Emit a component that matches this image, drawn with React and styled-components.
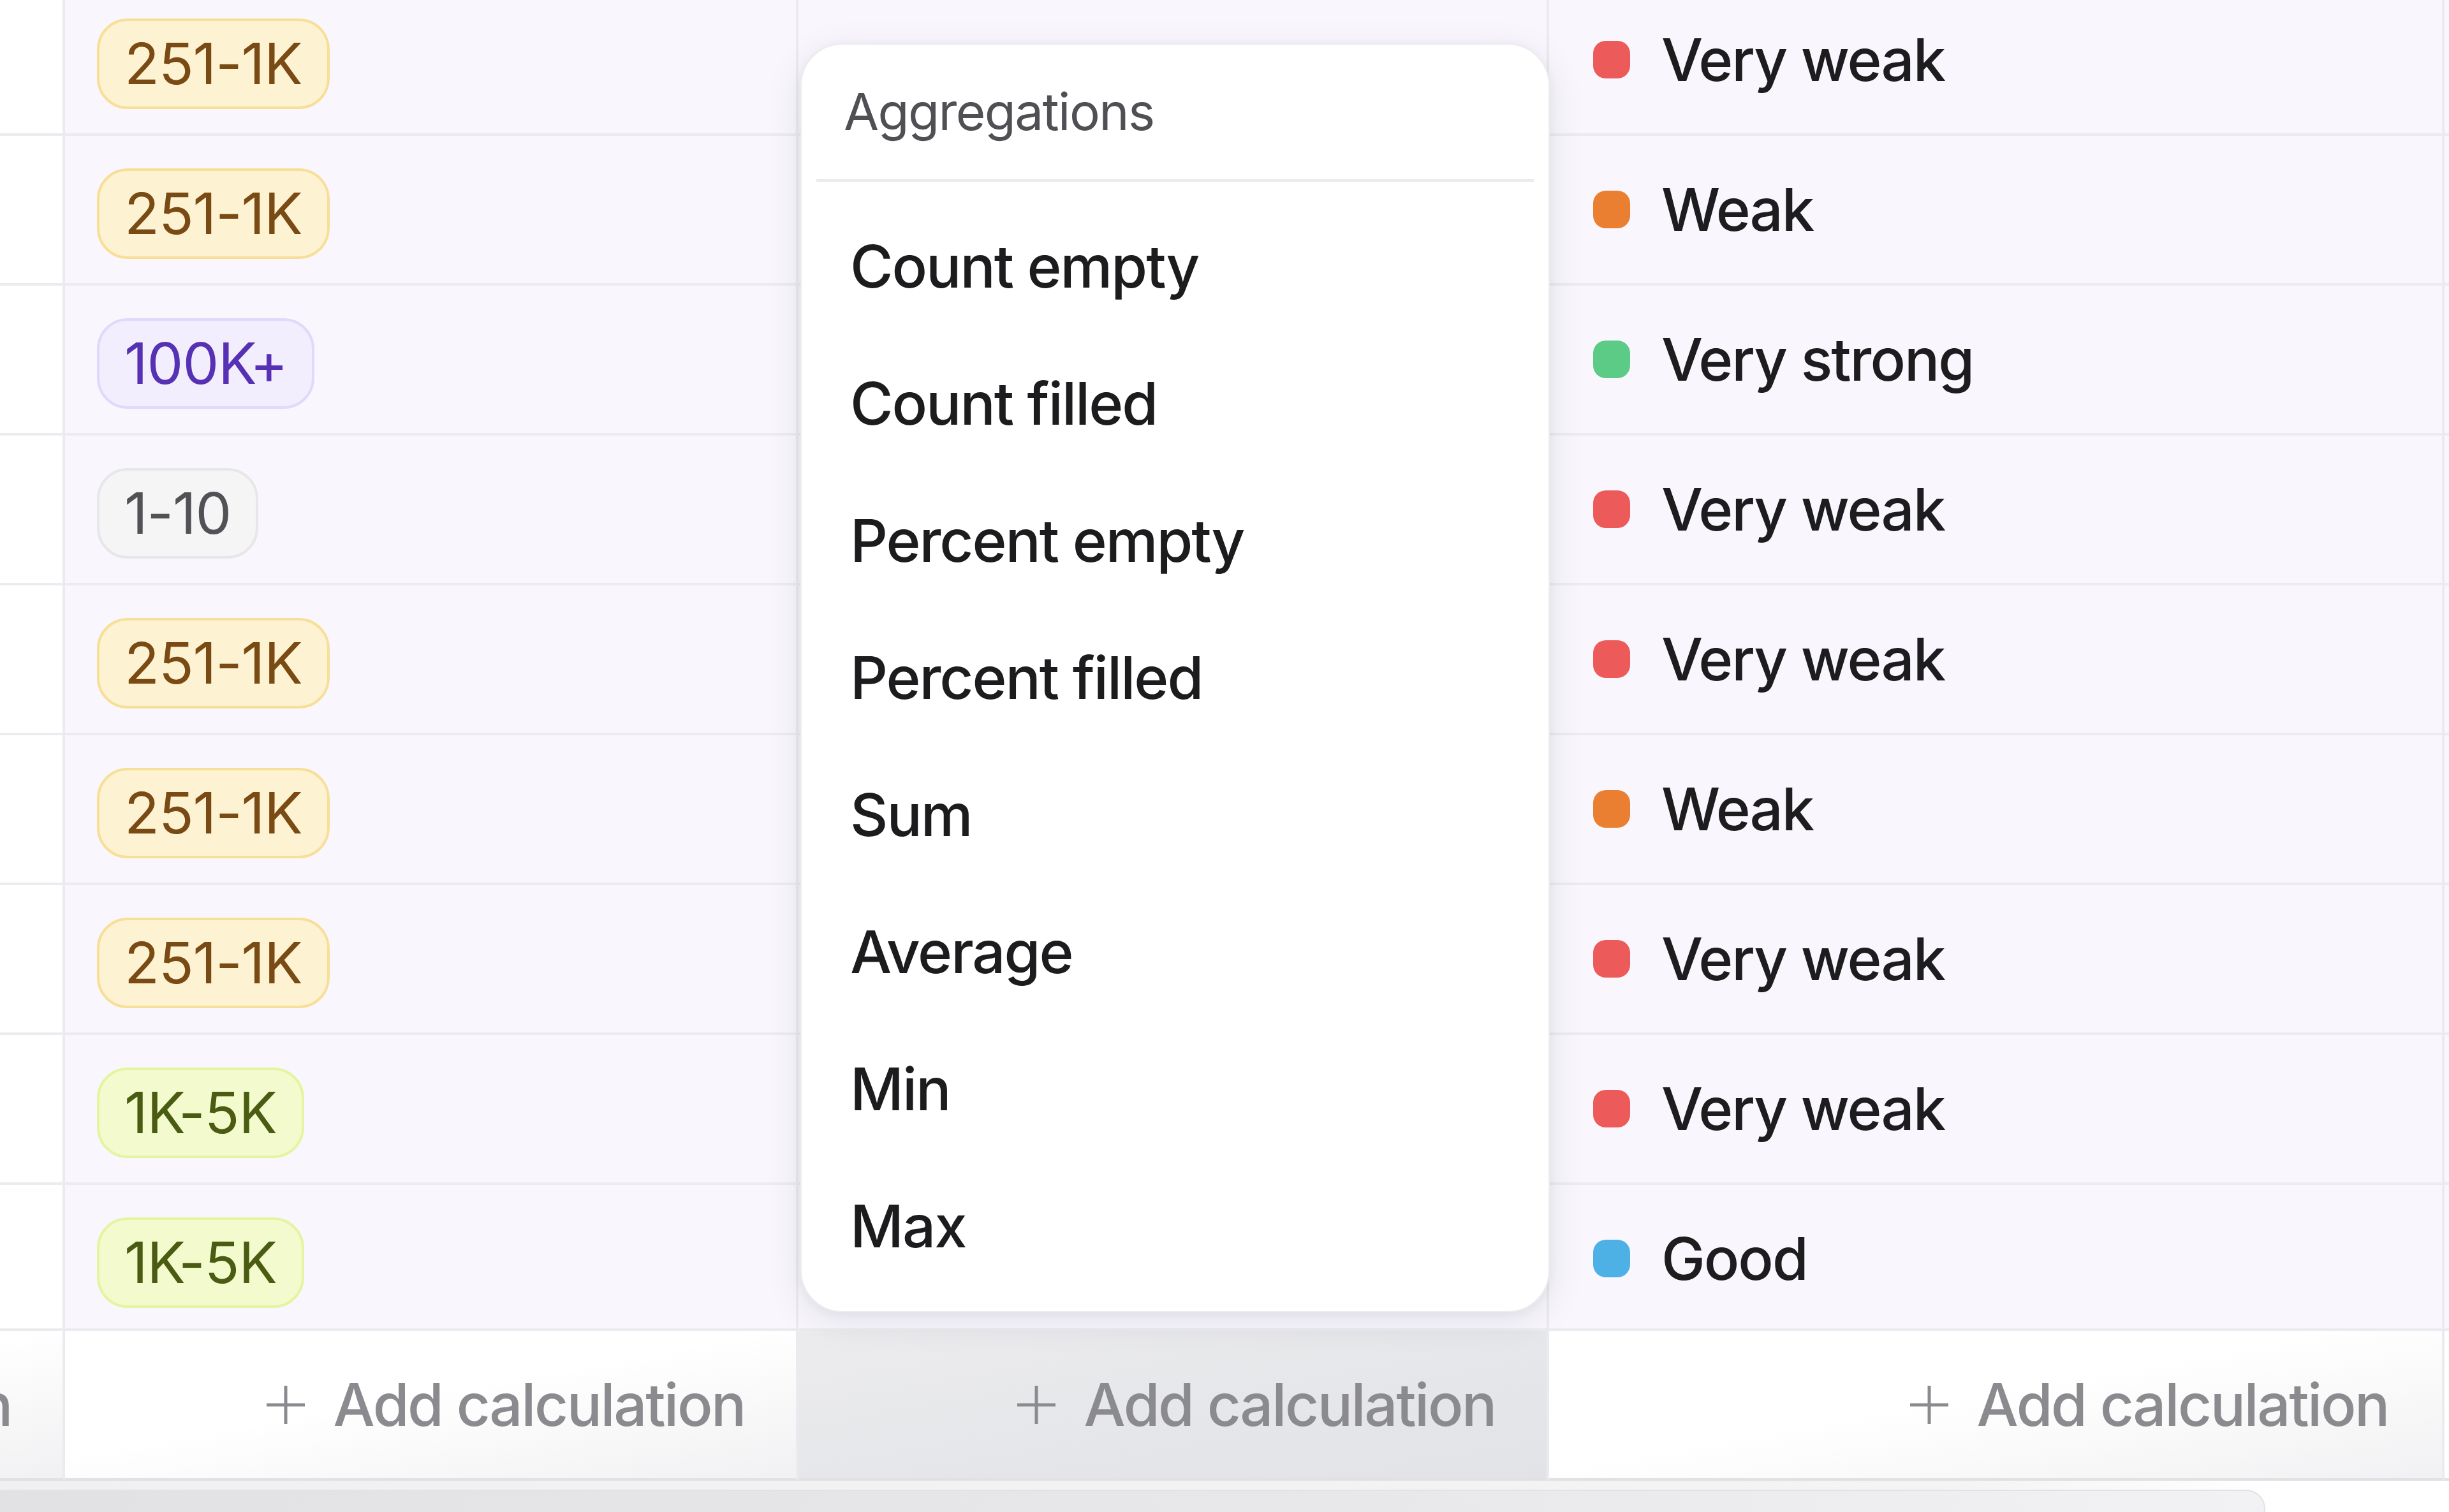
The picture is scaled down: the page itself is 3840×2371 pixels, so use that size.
import React from "react";
import styled, { createGlobalStyle } from "styled-components";

const GlobalStyle = createGlobalStyle`
  html, body { margin: 0; padding: 0; background: #ffffff; overflow: hidden; }
  body {
    font-family: Inter, "Noto Sans", "Liberation Sans", sans-serif;
    -webkit-font-smoothing: antialiased;
  }
`;

const COLS = "1152px 1150px 1177px 1404px 1200px";

const Viewport = styled.div`
  position: relative;
  width: 3840px;
  height: 2371px;
  overflow: hidden;
  background: #ffffff;
  display: flex;
  flex-direction: column;
`;

const Sheet = styled.div`
  margin-top: -22px;
  margin-left: -1050px;
  display: flex;
  flex-direction: column;
`;

const Row = styled.div`
  display: grid;
  grid-template-columns: ${COLS};
  height: 235px;
`;

const Cell = styled.div`
  box-sizing: border-box;
  display: flex;
  align-items: center;
  border-right: 4px solid #ebebef;
  border-bottom: 4px solid #ececf0;
  background: ${(p) => (p.$frozen ? "#ffffff" : "#f9f7fd")};
  padding-left: ${(p) => p.$pl || 0}px;
  padding-top: ${(p) => p.$pt || 0}px;
`;

const Badge = styled.span`
  box-sizing: border-box;
  display: inline-flex;
  align-items: center;
  height: 142px;
  padding: 0 39px;
  border-radius: 48px;
  border: 4px solid ${(p) => p.$border};
  background: ${(p) => p.$bg};
  color: ${(p) => p.$fg};
  font-size: 90px;
  letter-spacing: -1px;
  white-space: nowrap;
`;

const Status = styled.div`
  display: flex;
  align-items: center;
  gap: 49px;
  font-size: 92px;
  font-weight: 500;
  letter-spacing: -2px;
  color: #1d1d1f;
  white-space: nowrap;
`;

const Dot = styled.span`
  width: 58px;
  height: 59px;
  border-radius: 20px;
  background: ${(p) => p.$color};
  flex: none;
`;

const FooterRow = styled.div`
  position: relative;
  z-index: 1;
  margin-top: -10px;
  display: grid;
  grid-template-columns: ${COLS};
  height: 239px;
`;

const FooterCell = styled.div`
  box-sizing: border-box;
  display: flex;
  align-items: center;
  justify-content: flex-end;
  gap: 43px;
  padding-right: ${(p) => p.$pr || 80}px;
  border-top: 4px solid #ebebef;
  border-right: 4px solid #ebebef;
  border-bottom: 4px solid #e1e1e4;
  background: ${(p) =>
    p.$active
      ? "linear-gradient(170deg, #ececee 0%, #e5e6e9 60%, #e2e3e6 100%)"
      : "linear-gradient(170deg, #ffffff 45%, #f1f1f3 100%)"};
  color: #8b8b8f;
  font-size: 92px;
  font-weight: 500;
  letter-spacing: -2.4px;
  white-space: nowrap;
`;

const Track = styled.div`
  flex: 1;
  padding-top: 14px;
  background: linear-gradient(to right, #f0f0f2 0%, #f4f4f5 80%, #ffffff 93%);
`;

const Thumb = styled.div`
  box-sizing: border-box;
  width: 3552px;
  height: 60px;
  border: 2px solid #e2e2e4;
  border-left: none;
  border-radius: 0 30px 30px 0;
  background: linear-gradient(to right, #e2e2e4 0%, #e8e8ea 60%, #f2f2f4 100%);
`;

const Popup = styled.div`
  position: absolute;
  z-index: 2;
  left: 1255px;
  top: 68px;
  width: 1175px;
  box-sizing: border-box;
  background: #ffffff;
  border: 2px solid #ececee;
  border-radius: 66px;
  box-shadow: 0 14px 60px rgba(20, 20, 40, 0.09), 0 4px 16px rgba(20, 20, 40, 0.05);
  padding-bottom: 26px;
`;

const PopupHeader = styled.div`
  padding: 56px 0 58px 66px;
  font-size: 80px;
  line-height: 97px;
  letter-spacing: -1.6px;
  color: #4f4f54;
`;

const Separator = styled.div`
  height: 4px;
  margin: 0 23px;
  background: #ebebed;
`;

const ItemList = styled.div`
  padding-top: 25px;
  display: flex;
  flex-direction: column;
`;

const Item = styled.div`
  height: 215px;
  line-height: 215px;
  padding-left: 76px;
  font-size: 92px;
  font-weight: 500;
  letter-spacing: -2px;
  color: #1c1c1e;
  white-space: nowrap;
`;

const PlusIcon = () => (
  <svg width="64" height="64" viewBox="0 0 64 64" fill="none">
    <path d="M32 2V62M2 32H62" stroke="#8b8b8f" strokeWidth="5" />
  </svg>
);

const BADGES = {
  "251-1K": { bg: "#fdf3d2", border: "#f8df98", fg: "#7a4a14" },
  "100K+": { bg: "#f2eefe", border: "#e1d8fb", fg: "#5631b3" },
  "1-10": { bg: "#f5f5f6", border: "#e7e7ea", fg: "#515156" },
  "1K-5K": { bg: "#f3fbce", border: "#e5f4a0", fg: "#4a5c12" },
};

const DOTS = {
  "Very weak": "#ec5b5a",
  Weak: "#ea7f32",
  "Very strong": "#5ccb85",
  Good: "#4db1e6",
};

const ROWS = [
  ["251-1K", "Very weak"],
  ["251-1K", "Weak"],
  ["100K+", "Very strong"],
  ["1-10", "Very weak"],
  ["251-1K", "Very weak"],
  ["251-1K", "Weak"],
  ["251-1K", "Very weak"],
  ["1K-5K", "Very weak"],
  ["1K-5K", "Good"],
];

const AGGS = [
  "Count empty",
  "Count filled",
  "Percent empty",
  "Percent filled",
  "Sum",
  "Average",
  "Min",
  "Max",
];

const AddCalc = ({ active, pr }) => (
  <FooterCell $active={active} $pr={pr}>
    <PlusIcon />
    <span>Add calculation</span>
  </FooterCell>
);

export default function App() {
  return (
    <>
      <GlobalStyle />
      <Viewport>
        <Sheet>
          {ROWS.map(([size, status], i) => {
            const b = BADGES[size];
            return (
              <Row key={i}>
                <Cell $frozen />
                <Cell $pl={50} $pt={12}>
                  <Badge $bg={b.bg} $border={b.border} $fg={b.fg}>
                    {size}
                  </Badge>
                </Cell>
                <Cell />
                <Cell $pl={69}>
                  <Status>
                    <Dot $color={DOTS[status]} />
                    {status}
                  </Status>
                </Cell>
                <Cell />
              </Row>
            );
          })}
          <FooterRow>
            <AddCalc />
            <AddCalc />
            <AddCalc active />
            <AddCalc pr={84} />
            <FooterCell />
          </FooterRow>
        </Sheet>
        <Track>
          <Thumb />
        </Track>
        <Popup>
          <PopupHeader>Aggregations</PopupHeader>
          <Separator />
          <ItemList>
            {AGGS.map((a) => (
              <Item key={a}>{a}</Item>
            ))}
          </ItemList>
        </Popup>
      </Viewport>
    </>
  );
}
